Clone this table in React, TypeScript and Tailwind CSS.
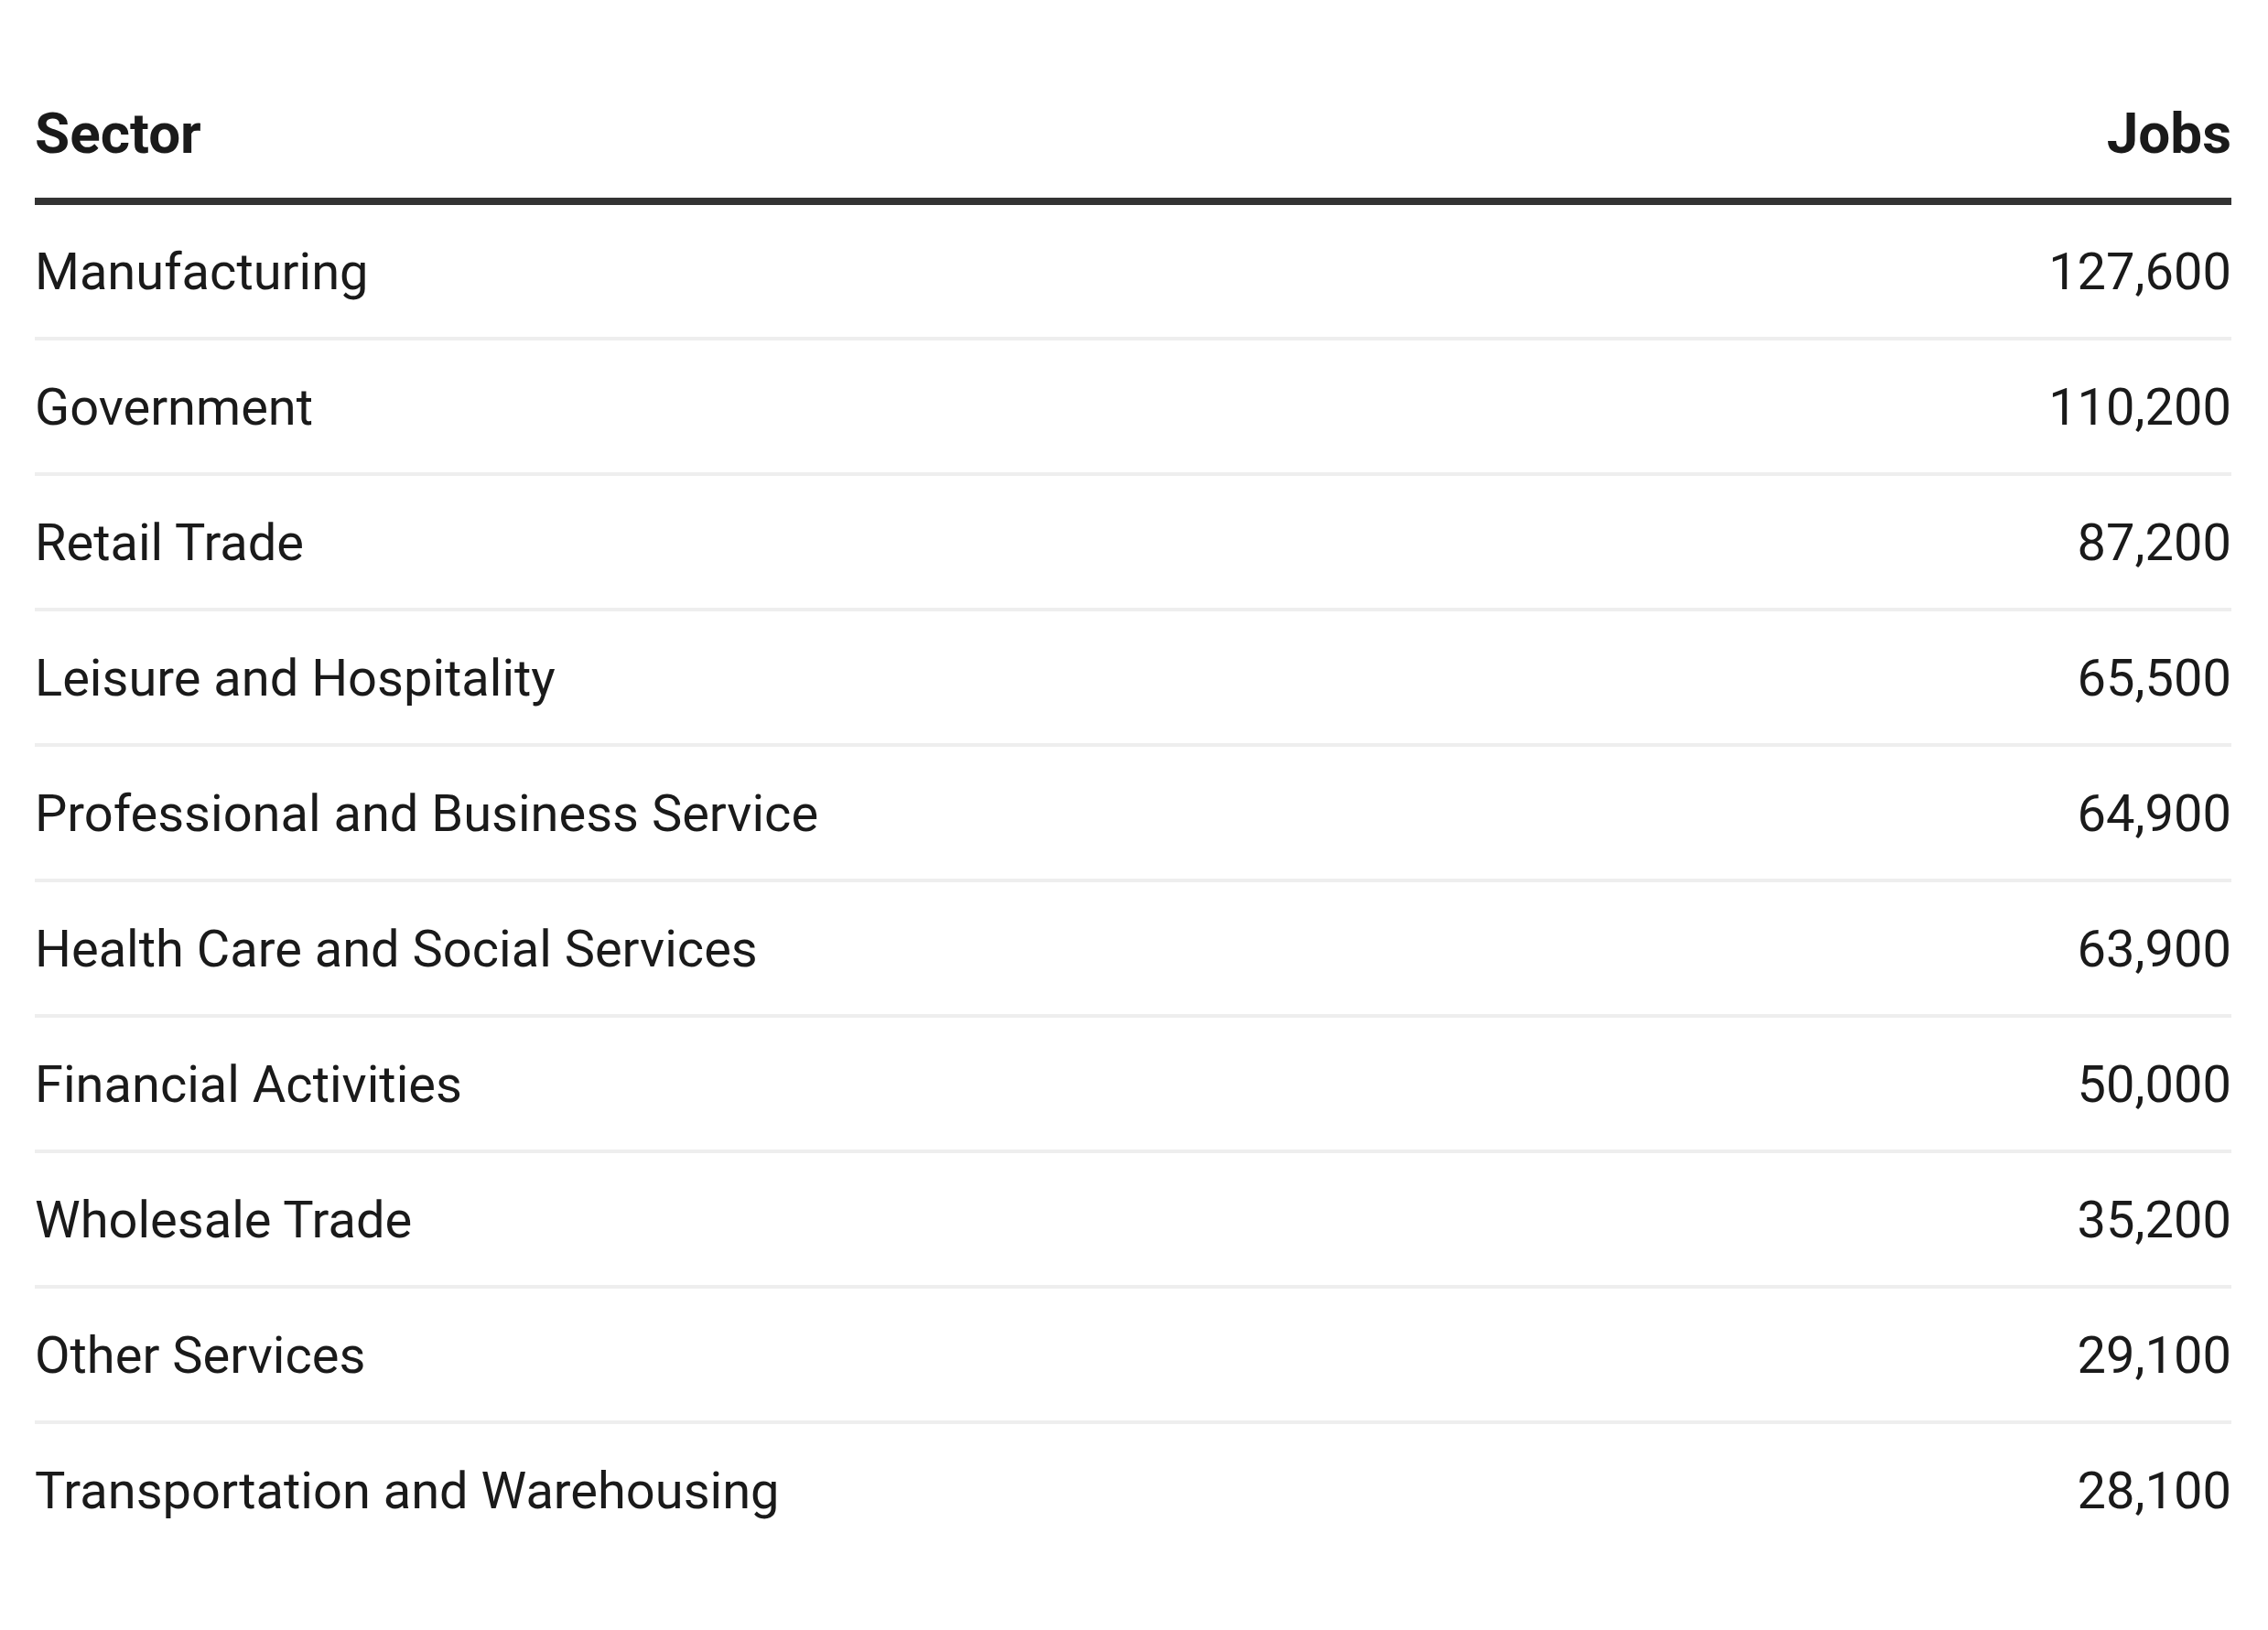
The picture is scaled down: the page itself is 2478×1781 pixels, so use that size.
const rows: [string, string][] = [
  ["Manufacturing", "127,600"],
  ["Government", "110,200"],
  ["Retail Trade", "87,200"],
  ["Leisure and Hospitality", "65,500"],
  ["Professional and Business Service", "64,900"],
  ["Health Care and Social Services", "63,900"],
  ["Financial Activities", "50,000"],
  ["Wholesale Trade", "35,200"],
  ["Other Services", "29,100"],
  ["Transportation and Warehousing", "28,100"],
];

export default function App() {
  return (
    <div className="w-[2478px] h-[1781px] bg-white pt-[72px] pl-[38px] font-['Roboto',sans-serif] text-[#1a1a1a]">
      <table className="w-[2400px] border-collapse">
        <thead>
          <tr className="border-b-8 border-[#333333]">
            <th className="text-left font-bold text-[62px] leading-[72px] pt-[38px] pb-[34px] px-0">Sector</th>
            <th className="text-right font-bold text-[62px] leading-[72px] pt-[38px] pb-[34px] px-0">Jobs</th>
          </tr>
        </thead>
        <tbody>
          {rows.map(([sector, jobs], i) => (
            <tr key={sector} className={i < rows.length - 1 ? "border-b-4 border-[#eeeeee]" : ""}>
              <td className="text-left text-[56px] leading-[142px] pt-[2px] px-0">{sector}</td>
              <td className="text-right text-[56px] leading-[142px] pt-[2px] px-0">{jobs}</td>
            </tr>
          ))}
        </tbody>
      </table>
    </div>
  );
}
